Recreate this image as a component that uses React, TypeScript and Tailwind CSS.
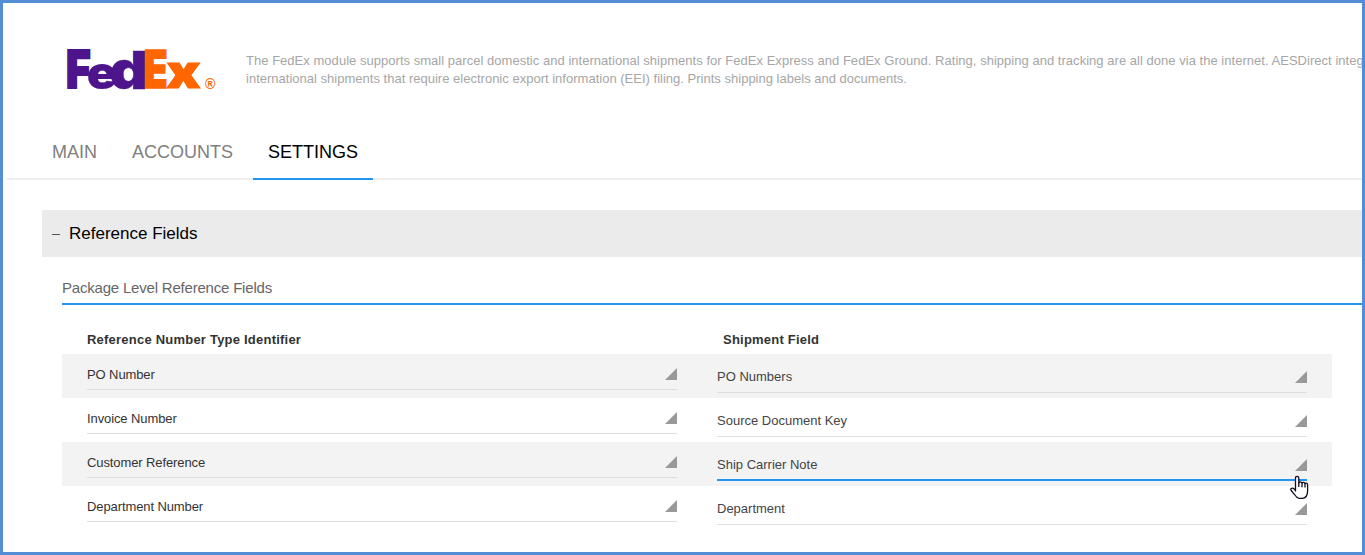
const rows = [
  { type: 'PO Number', field: 'PO Numbers' },
  { type: 'Invoice Number', field: 'Source Document Key' },
  { type: 'Customer Reference', field: 'Ship Carrier Note', active: true },
  { type: 'Department Number', field: 'Department' },
];

function Logo() {
  return (
    <svg width="152" height="46" viewBox="65 46 152 46" className="block shrink-0 overflow-visible" fontFamily="Inter, sans-serif" fontWeight="900" fontSize="54">
      <g fill="#4d148c" stroke="#4d148c" strokeWidth="2">
        <text transform="translate(66 87.9) scale(0.78 0.965)">F</text>
        <text transform="translate(86.8 89) scale(0.93 0.86)" strokeWidth="0.2">e</text>
        <text transform="translate(109.6 88.9) scale(1.1 0.96)" strokeWidth="0.5">d</text>
      </g>
      <g fill="#ff6600" stroke="#ff6600" strokeWidth="1.6">
        <text transform="translate(143.8 88) scale(0.72 0.965)">E</text>
        <text transform="translate(166.6 88) scale(1.03 0.83)" strokeWidth="1.4">x</text>
        <text x="205" y="89" fontSize="14" fontWeight="700" stroke="none" fontFamily="Liberation Sans">®</text>
      </g>
    </svg>
  );
}

function Picker({ label, active }: { label: string; active?: boolean }) {
  return (
    <div className={`flex h-[34px] w-[590px] justify-between ${active ? 'border-b-2 border-[#2196f3]' : 'border-b border-[#dddddd]'}`}>
      <span className="leading-[16px]">{label}</span>
      <svg width="12" height="12" className="mt-[12px]" viewBox="0 0 12 12">
        <path d="M12 0V12H0Z" fill="#999999" />
      </svg>
    </div>
  );
}

function Pointer() {
  return (
    <svg width="20" height="26" viewBox="0 0 20 26" className="absolute left-[1287px] top-[470px]">
      <path
        d="M5.5 16V5Q5.5 3.3 7.1 3.3T8.8 5V10Q9 8.8 10.3 8.8T12 10Q12.2 9.3 13.5 9.3T15 10.7Q15.3 10.2 16.2 10.2Q17.6 10.2 17.6 12V18Q17.6 25.5 11 25.5Q6.7 25.5 4.8 21.8L1.2 17.5Q.2 15.9 1.6 15.3Q3 14.7 4.2 16L5.5 18Z"
        fill="white"
        stroke="#10101f"
        strokeWidth="1.3"
        strokeLinejoin="round"
      />
      <path d="M8.8 9V14M12 10V14.3M15 10.7V14.5" stroke="#10101f" strokeWidth="1.3" fill="none" />
    </svg>
  );
}

export default function App() {
  return (
    <div className="relative h-[555px] w-[1365px] overflow-hidden border-[3px] border-[#538dd5] bg-white font-['Liberation_Sans',Arial,sans-serif]">
      <header className="flex h-[130px] pl-[62px] pt-[43px]">
        <Logo />
        <p className="ml-[29px] mt-[6px] whitespace-nowrap text-[13px] leading-[18px] tracking-[0.03px] text-[#a6a6a6]">
          The FedEx module supports small parcel domestic and international shipments for FedEx Express and FedEx Ground. Rating, shipping and tracking are all done via the internet. AESDirect integration for
          <br />
          <span className="tracking-[0.01px]">international shipments that require electronic export information (EEI) filing. Prints shipping labels and documents.</span>
        </p>
      </header>

      <nav className="ml-[4px] flex h-[47px] gap-[5px] border-b-2 border-[#eeeeee] pl-[30px] text-[18px] leading-[38px] text-[#808080]">
        <span className="w-[75px] pl-[15px]">MAIN</span>
        <span className="w-[131px] pl-[15px]">ACCOUNTS</span>
        <span className="h-[47px] w-[120px] border-b-2 border-[#2196f3] pl-[15px] text-black">SETTINGS</span>
      </nav>

      <main className="pl-[39px] pt-[30px]">
        <h2 className="flex h-[47px] items-center bg-[#ebebeb] pl-[10px] text-[17px] text-black">
          <span className="w-[17px] text-[14px] text-[#555555]">–</span>
          Reference Fields
        </h2>
        <section className="pl-[20px] pt-[20px]">
          <h3 className="h-[28px] border-b-2 border-[#2196f3] text-[15px] leading-[22px] tracking-[-0.2px] text-[#666666]">Package Level Reference Fields</h3>
          <div className="w-[1270px] text-[13px] text-[#444444]">
            <div className="flex h-[49px] pl-[25px] pt-[27px] font-bold leading-[16px] tracking-[0.22px] text-[#333333]">
              <span className="w-[636px]">Reference Number Type Identifier</span>
              <span>Shipment Field</span>
            </div>
            {rows.map((row) => (
              <div key={row.type} className="flex h-[44px] gap-[40px] pl-[25px] pt-[2px] odd:bg-white even:bg-[#f3f3f3]">
                <div className="tracking-[-0.1px] text-[#333333] [&_span]:pt-[11px]">
                  <Picker label={row.type} />
                </div>
                <div className="pt-[3px] [&_span]:pt-[10px]">
                  <Picker label={row.field} active={row.active} />
                </div>
              </div>
            ))}
          </div>
        </section>
      </main>
      <Pointer />
    </div>
  );
}
